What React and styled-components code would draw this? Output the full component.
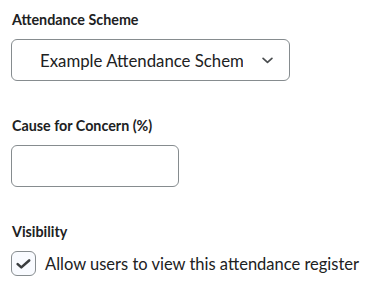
import styled, { createGlobalStyle } from 'styled-components';

const GlobalStyle = createGlobalStyle`
  body {
    margin: 0;
    background: #ffffff;
    font-family: Lato, "Open Sans", sans-serif;
    color: #202122;
  }
`;

function App() {
  return (
    <>
      <GlobalStyle />
      <Form>
        <Field>
          <Label>Attendance Scheme</Label>
          <SelectBox>
            <SelectText>Example Attendance Scheme</SelectText>
            <Chevron viewBox="0 0 12 7">
              <path d="M1.2 1.2 L6 5.6 L10.8 1.2" />
            </Chevron>
          </SelectBox>
        </Field>

        <Field>
          <Label>Cause for Concern (%)</Label>
          <TextInput type="text" />
        </Field>

        <Field>
          <Label>Visibility</Label>
          <CheckRow>
            <CheckBox>
              <svg viewBox="0 0 16 11" width="15" height="10">
                <path d="M1.6 5.6 L5.6 9.2 L14.2 1.6" />
              </svg>
            </CheckBox>
            <CheckLabel>Allow users to view this attendance register</CheckLabel>
          </CheckRow>
        </Field>
      </Form>
    </>
  );
}

export default App;

const Form = styled.div`
  display: flex;
  flex-direction: column;
  gap: 36px;
  padding: 11px 11px 0;
`;

const Field = styled.div`
  display: flex;
  flex-direction: column;
  gap: 10px;
`;

const Label = styled.div`
  font-size: 14.3px;
  font-weight: 700;
  line-height: 18px;
  padding-left: 1px;
`;

const SelectBox = styled.div`
  box-sizing: border-box;
  width: 279px;
  height: 42px;
  border: 1px solid #868c8f;
  border-radius: 6px;
  display: flex;
  align-items: center;
  padding: 0 16px 0 28px;
  gap: 19px;
`;

const SelectText = styled.span`
  flex: 1;
  font-size: 16.8px;
  white-space: nowrap;
  overflow: hidden;
`;

const Chevron = styled.svg`
  width: 11px;
  height: 7px;
  fill: none;
  stroke: #494c4e;
  stroke-width: 1.8;
  stroke-linecap: round;
  stroke-linejoin: round;
`;

const TextInput = styled.input`
  box-sizing: border-box;
  width: 168px;
  height: 42px;
  border: 1px solid #868c8f;
  border-radius: 6px;
  margin: 0;
  outline: none;
`;

const CheckRow = styled.div`
  display: flex;
  align-items: center;
  gap: 9px;
`;

const CheckBox = styled.div`
  box-sizing: border-box;
  width: 25px;
  height: 25px;
  border: 1px solid #868c8f;
  border-radius: 6px;
  background: #f9fbff;
  display: flex;
  align-items: center;
  justify-content: center;

  & path {
    fill: none;
    stroke: #3a3d3f;
    stroke-width: 2.8;
    stroke-linecap: round;
    stroke-linejoin: round;
  }
`;

const CheckLabel = styled.span`
  font-size: 16.5px;
  line-height: 20px;
`;
